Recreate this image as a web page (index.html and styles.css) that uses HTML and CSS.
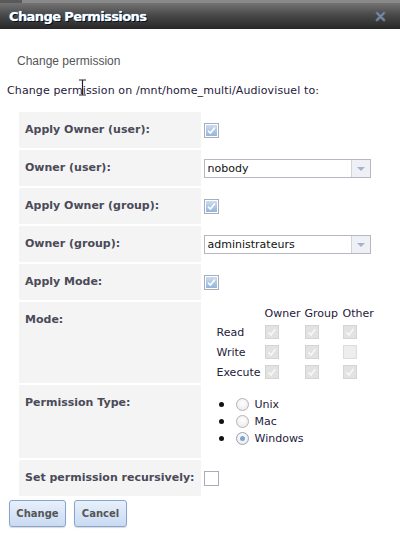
FILE: index.html
```html
<!DOCTYPE html>
<html>
<head>
<meta charset="utf-8">
<link rel="stylesheet" href="styles.css">
</head>
<body>
<div class="topstrip"><span class="tab"></span></div>
<div class="titlebar">
  <span class="title">Change Permissions</span>
  <svg class="close" width="11" height="11" viewBox="0 0 11 11"><path d="M2 2 L9 9 M9 2 L2 9" stroke="#5d6d86" stroke-width="3" stroke-linecap="round"/><path d="M2 2 L9 9 M9 2 L2 9" stroke="#7e8ea6" stroke-width="1.2" stroke-linecap="round"/></svg>
</div>
<div class="content">
  <p class="sub">Change permission</p>
  <p class="intro">Change permission on /mnt/home_multi/Audiovisuel to:</p>
  <svg class="cursor" width="9" height="17" viewBox="0 0 9 17"><path d="M1 1 H8 M4.5 1 V16 M1 16 H8" stroke="#223" stroke-width="1.2" fill="none"/></svg>
  <table class="form">
    <tr>
      <th>Apply Owner (user):</th>
      <td><span class="cb checked"><svg viewBox="0 0 13 13"><path d="M2.5 7 L5.2 9.5 L10.5 3" stroke="#fff" stroke-width="2" fill="none"/></svg></span></td>
    </tr>
    <tr>
      <th>Owner (user):</th>
      <td><div class="select"><span class="val">nobody</span><span class="arrow"><i></i></span></div></td>
    </tr>
    <tr>
      <th>Apply Owner (group):</th>
      <td><span class="cb checked"><svg viewBox="0 0 13 13"><path d="M2.5 7 L5.2 9.5 L10.5 3" stroke="#fff" stroke-width="2" fill="none"/></svg></span></td>
    </tr>
    <tr>
      <th>Owner (group):</th>
      <td><div class="select"><span class="val">administrateurs</span><span class="arrow"><i></i></span></div></td>
    </tr>
    <tr>
      <th>Apply Mode:</th>
      <td><span class="cb checked"><svg viewBox="0 0 13 13"><path d="M2.5 7 L5.2 9.5 L10.5 3" stroke="#fff" stroke-width="2" fill="none"/></svg></span></td>
    </tr>
    <tr class="tall moderow">
      <th>Mode:</th>
      <td>
        <div class="mode">
          <span></span><span class="hd">Owner</span><span class="hd">Group</span><span class="hd">Other</span>
          <span class="rl">Read</span>
          <span class="dis on"><svg viewBox="0 0 12 12"><path d="M2.5 6.5 L5 9 L9.5 3" stroke="#f6f6f6" stroke-width="1.8" fill="none"/></svg></span>
          <span class="dis on"><svg viewBox="0 0 12 12"><path d="M2.5 6.5 L5 9 L9.5 3" stroke="#f6f6f6" stroke-width="1.8" fill="none"/></svg></span>
          <span class="dis on"><svg viewBox="0 0 12 12"><path d="M2.5 6.5 L5 9 L9.5 3" stroke="#f6f6f6" stroke-width="1.8" fill="none"/></svg></span>
          <span class="rl">Write</span>
          <span class="dis on"><svg viewBox="0 0 12 12"><path d="M2.5 6.5 L5 9 L9.5 3" stroke="#f6f6f6" stroke-width="1.8" fill="none"/></svg></span>
          <span class="dis on"><svg viewBox="0 0 12 12"><path d="M2.5 6.5 L5 9 L9.5 3" stroke="#f6f6f6" stroke-width="1.8" fill="none"/></svg></span>
          <span class="dis off"></span>
          <span class="rl">Execute</span>
          <span class="dis on"><svg viewBox="0 0 12 12"><path d="M2.5 6.5 L5 9 L9.5 3" stroke="#f6f6f6" stroke-width="1.8" fill="none"/></svg></span>
          <span class="dis on"><svg viewBox="0 0 12 12"><path d="M2.5 6.5 L5 9 L9.5 3" stroke="#f6f6f6" stroke-width="1.8" fill="none"/></svg></span>
          <span class="dis on"><svg viewBox="0 0 12 12"><path d="M2.5 6.5 L5 9 L9.5 3" stroke="#f6f6f6" stroke-width="1.8" fill="none"/></svg></span>
        </div>
      </td>
    </tr>
    <tr class="tall typerow">
      <th>Permission Type:</th>
      <td>
        <ul class="radios">
          <li><span class="dot"></span><span class="radio"></span>Unix</li>
          <li><span class="dot"></span><span class="radio"></span>Mac</li>
          <li><span class="dot"></span><span class="radio sel"></span>Windows</li>
        </ul>
      </td>
    </tr>
    <tr>
      <th>Set permission recursively:</th>
      <td><span class="cb"></span></td>
    </tr>
  </table>
  <div class="buttons">
    <button class="btn">Change</button>
    <button class="btn">Cancel</button>
  </div>
</div>
</body>
</html>
```
FILE: styles.css
```css
html, body {
  margin: 0;
  padding: 0;
  background: #fff;
  width: 400px;
  height: 539px;
  overflow: hidden;
}
body {
  font-family: "DejaVu Sans", Verdana, sans-serif;
  color: #222;
}
.topstrip {
  height: 3px;
  background: #8a8a8a;
  display: flex;
}
.topstrip .tab {
  width: 22px;
  background: #5a5a5a;
}
.titlebar {
  height: 26px;
  background: linear-gradient(#747474, #4a4a4a 45%, #262626);
  display: flex;
  align-items: center;
  justify-content: space-between;
  padding: 0 14px 0 9px;
}
.title {
  color: #fff;
  font-weight: bold;
  font-size: 13px;
  letter-spacing: -0.6px;
  text-shadow: 0 0 1px #8cf, 1px 1px 0 #000;
}
.close {
  margin-top: 1px;
}
.content {
  position: relative;
}
.sub {
  margin: 0;
  padding: 25px 0 0 17px;
  font-family: "Liberation Sans", Arial, sans-serif;
  font-size: 12px;
  line-height: 14px;
  color: #555;
}
.intro {
  margin: 0;
  padding: 16px 0 0 7px;
  font-size: 11px;
  line-height: 14px;
  color: #24203a;
  letter-spacing: 0.12px;
}
.cursor {
  position: absolute;
  left: 78px;
  top: 50px;
}
.form {
  border-collapse: separate;
  border-spacing: 2px;
  margin: 12px 0 0 17px;
}
.form th {
  width: 169px;
  height: 36px;
  box-sizing: border-box;
  background: #f4f4f4;
  text-align: left;
  vertical-align: top;
  padding: 11px 6px 0 6px;
  font-size: 11px;
  line-height: 14px;
  font-weight: bold;
  color: #4a4a58;
  white-space: nowrap;
}
.form td {
  vertical-align: top;
  padding: 9px 0 0 0;
  height: 36px;
  box-sizing: border-box;
}
.form .moderow th, .form .moderow td { height: 81px; }
.form .typerow th, .form .typerow td { height: 73px; }
.form td .cb {
  margin-left: 1px;
  margin-top: 2px;
}
.tall td { padding-top: 0; }
.cb {
  display: block;
  width: 15px;
  height: 15px;
  box-sizing: border-box;
  border: 1px solid #a9adb8;
  background: #fff;
}
.cb.checked {
  padding: 1px;
  background: #fff;
}
.cb.checked svg {
  display: block;
  width: 11px;
  height: 11px;
  background: linear-gradient(#cadcf2, #94b4dc);
}
.select {
  width: 167px;
  height: 19px;
  box-sizing: border-box;
  border: 1px solid #b5b8c2;
  display: flex;
  margin-left: 1px;
  background: #fff;
}
.select .val {
  flex: 1;
  font-size: 11px;
  line-height: 17px;
  padding-left: 3px;
  color: #111;
}
.select .arrow {
  width: 18px;
  border-left: 1px solid #d0d3da;
  background: #eef0f6;
  display: flex;
  align-items: center;
  justify-content: center;
}
.select .arrow i {
  width: 0;
  height: 0;
  border-left: 4px solid transparent;
  border-right: 4px solid transparent;
  border-top: 4px solid #a6b2c8;
}
.mode {
  display: grid;
  grid-template-columns: 48px 40px 38px auto;
  grid-template-rows: 15px 20px 20px 20px;
  margin: 5px 0 0 14px;
  font-size: 11px;
  color: #24203a;
  align-items: center;
}
.mode .hd {
  line-height: 14px;
  align-self: start;
}
.dis {
  display: block;
  width: 14px;
  height: 14px;
  box-sizing: border-box;
  border: 1px solid #d4d4d4;
  background: #e2e2e2;
}
.dis svg {
  display: block;
  width: 12px;
  height: 12px;
}
.dis.off {
  background: #ededed;
  border-color: #dcdcdc;
}
.radios {
  margin: 11px 0 0 0;
  padding: 0 0 0 16px;
  list-style: none;
  font-size: 11px;
  line-height: 17px;
  color: #24203a;
}
.radios li {
  display: flex;
  align-items: center;
}
.dot {
  width: 5px;
  height: 5px;
  border-radius: 50%;
  background: #111;
  margin-right: 12px;
}
.radio {
  display: block;
  width: 13px;
  height: 13px;
  box-sizing: border-box;
  border-radius: 50%;
  border: 1px solid #b4b4b4;
  background: radial-gradient(circle at 50% 40%, #fff, #e6e6e6);
  margin-right: 6px;
  position: relative;
}
.radio.sel {
  border-color: #9aa4b4;
}
.radio.sel::after {
  content: "";
  position: absolute;
  left: 3px;
  top: 3px;
  width: 5px;
  height: 5px;
  border-radius: 50%;
  background: #7da4d0;
}
.buttons {
  display: flex;
  gap: 8px;
  padding: 2px 0 0 9px;
}
.btn {
  height: 27px;
  padding: 0 6px;
  border: 1px solid #87a4cc;
  border-radius: 3px;
  background: linear-gradient(#e8f0fb, #c9daf2);
  font-family: "DejaVu Sans", Verdana, sans-serif;
  font-weight: bold;
  font-size: 10px;
  color: #555;
  box-shadow: 0 1px 1px rgba(0,0,0,0.15);
}
.btn:first-child { width: 57px; }
.btn:last-child { width: 53px; }
```
